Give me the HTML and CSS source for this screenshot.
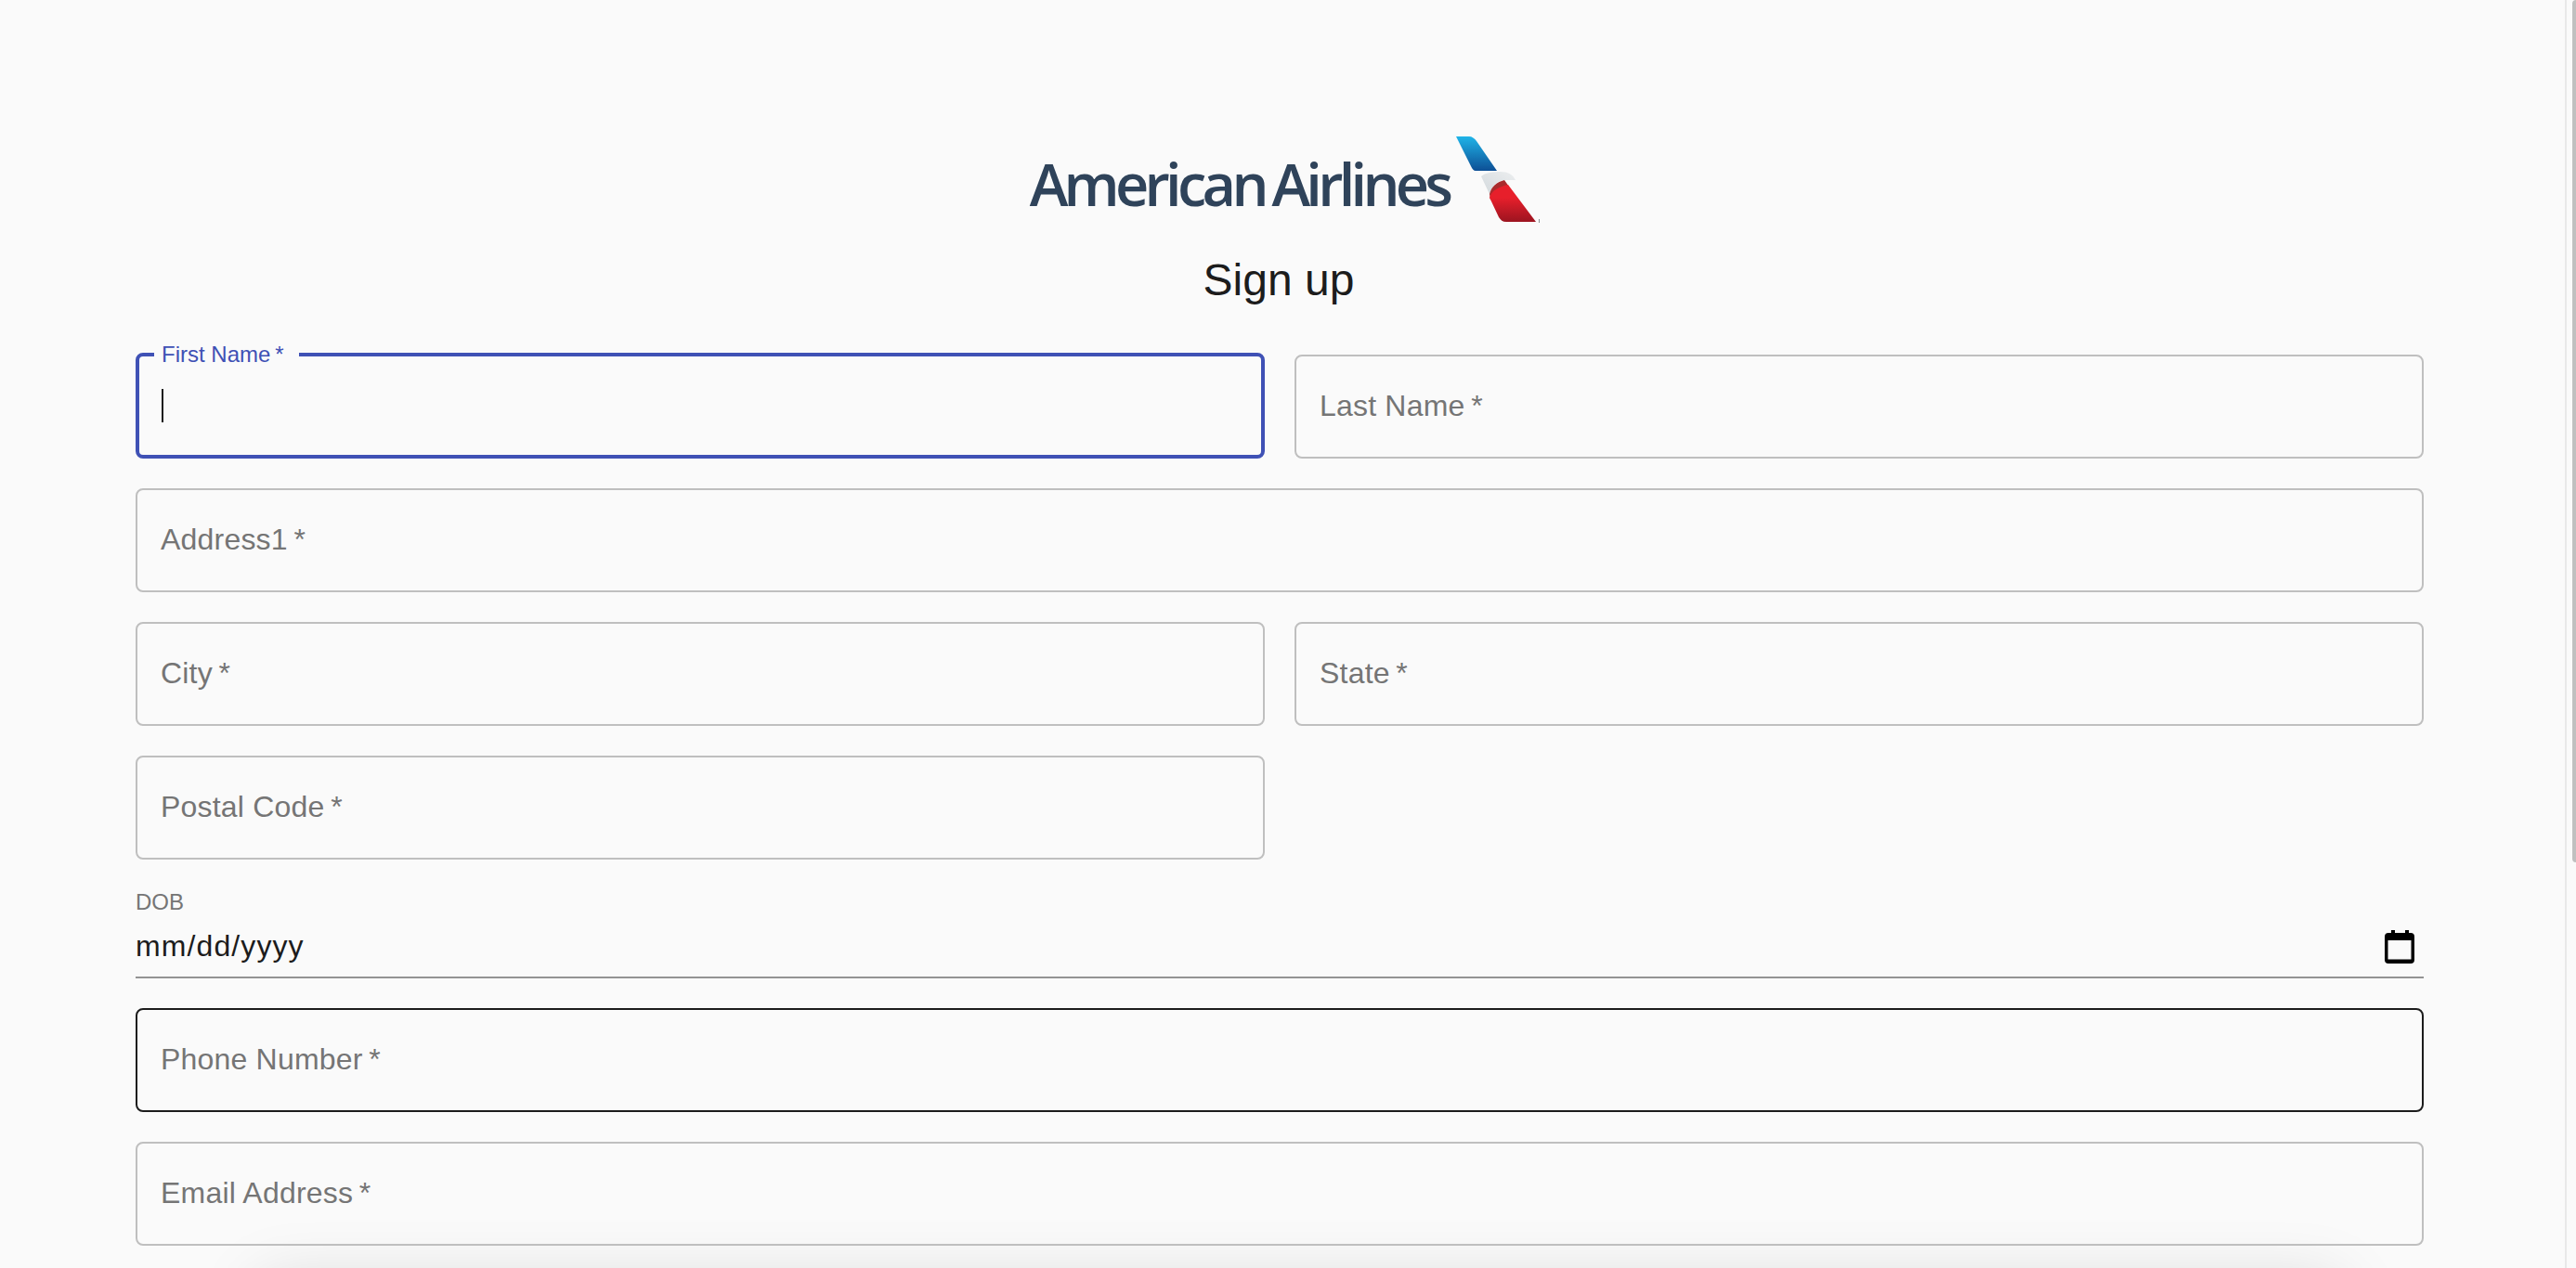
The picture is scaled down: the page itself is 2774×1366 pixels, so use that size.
FILE: index.html
```html
<!DOCTYPE html>
<html lang="en">
<head>
    <meta charset="UTF-8">
    <meta name="viewport" content="width=device-width, initial-scale=1.0">
    <title>Sign up</title>
    <link rel="stylesheet" href="styles.css">
</head>
<body>

<main class="page">
    <div class="logo">
        <span class="logo-text">American Airlines</span>
        <svg class="logo-tail" viewBox="0 0 94 94" width="94" height="94">
            <defs>
                <linearGradient id="tailBlue" x1="0" y1="0" x2="0" y2="1">
                    <stop offset="0" stop-color="#1fb4e8"/>
                    <stop offset="1" stop-color="#0d4f95"/>
                </linearGradient>
                <linearGradient id="tailSilver" x1="0" y1="1" x2="1" y2="0">
                    <stop offset="0" stop-color="#d3d9dd"/>
                    <stop offset="1" stop-color="#eceeef"/>
                </linearGradient>
                <linearGradient id="tailRed" x1="0" y1="0" x2="0" y2="1">
                    <stop offset="0.35" stop-color="#e71f2b"/>
                    <stop offset="1" stop-color="#9c1420"/>
                </linearGradient>
            </defs>
            <path fill="url(#tailBlue)" d="M0 0H14C17 0 20 2 22 5L44 37H21C19 37 17.500 35 16.500 33Z"/>
            <path fill="url(#tailSilver)" d="M27 43C31 39 40 38 48 38C56 38 61 41 64 47H53C46 47 39 52 36 62Z"/>
            <path fill="#a92b2d" d="M36 62C38 54 44 49 52 47L57 54C47 55 39 60 37 68Z"/>
            <path fill="url(#tailRed)" d="M36 66C38 58 47 54 56 52L86 92H54C50 92 48 90 46 87L38 70Z"/>
            <path fill="#8a8f94" d="M89 89h1v4h-1z"/>
        </svg>
    </div>

    <h1 class="title">Sign up</h1>

    <form class="form">
        <div class="field field-focused">
            <span class="float-label">First Name&thinsp;*</span>
            <span class="caret"></span>
        </div>
        <div class="field"><span class="field-label">Last Name&thinsp;*</span></div>
        <div class="field wide"><span class="field-label">Address1&thinsp;*</span></div>
        <div class="field"><span class="field-label">City&thinsp;*</span></div>
        <div class="field"><span class="field-label">State&thinsp;*</span></div>
        <div class="field"><span class="field-label">Postal Code&thinsp;*</span></div>
        <div class="spacer"></div>
        <div class="date wide">
            <span class="date-label">DOB</span>
            <div class="date-input">
                <span>mm/dd/yyyy</span>
                <svg class="date-icon" viewBox="0 0 32 36" width="32" height="36">
                    <path d="M7 0h4v4H7zM22 0h4v4h-4z"/>
                    <path d="M4 3h24a4 4 0 0 1 4 4v25a4 4 0 0 1-4 4H4a4 4 0 0 1-4-4V7a4 4 0 0 1 4-4zM3.500 11v20.500h25V11z" fill-rule="evenodd"/>
                </svg>
            </div>
        </div>
        <div class="field field-hover wide"><span class="field-label">Phone Number&thinsp;*</span></div>
        <div class="field wide"><span class="field-label">Email Address&thinsp;*</span></div>
    </form>

    <div class="submit-shadow"></div>
</main>

<div class="scroll-track">
    <div class="scroll-thumb"></div>
</div>

</body>
</html>
```

FILE: styles.css
```css
body {
    margin: 0;
    display: flex;
    height: 1366px;
    overflow: hidden;
    background-color: #fafafa;
    font-family: 'Liberation Sans', Arial, sans-serif;
    color: #1c1c1c;
}

.page {
    width: 2762px;
    height: 1366px;
    overflow: hidden;
    box-sizing: border-box;
    padding: 147px 152px 0 146px;
}

.logo {
    display: flex;
    justify-content: center;
    align-items: flex-start;
    height: 123px;
    padding-left: 15px;
}

.logo-text {
    margin-top: 8px;
    font-family: 'Open Sans', sans-serif;
    font-size: 63px;
    line-height: 86px;
    font-weight: 600;
    letter-spacing: -4.7px;
    word-spacing: -4px;
    color: #2f435a;
}

.logo-tail {
    display: block;
    margin-left: 8px;
}

.title {
    margin: 0 0 48px;
    padding-right: 2px;
    font-size: 48px;
    font-weight: 400;
    line-height: 64px;
    text-align: center;
}

.form {
    display: grid;
    grid-template-columns: 1fr 1fr;
    gap: 32px;
}

.wide {
    grid-column: span 2;
}

.field {
    position: relative;
    box-sizing: border-box;
    height: 112px;
    display: flex;
    align-items: center;
    padding: 0 0 2px 25px;
    border: 2px solid #bfbfbf;
    border-radius: 8px;
    font-size: 32px;
    letter-spacing: 0.2px;
    color: #757575;
}

.field-hover {
    border-color: #1c1c1c;
}

.field-focused {
    height: 114px;
    margin-top: -2px;
    padding: 0 0 0 24px;
    border: 4px solid #3f51b5;
}

.float-label {
    position: absolute;
    left: 16px;
    top: -16px;
    padding: 0 17px 0 8px;
    background-color: #fafafa;
    font-size: 24px;
    line-height: 28px;
    letter-spacing: 0;
    color: #3f51b5;
}

.caret {
    width: 2px;
    height: 36px;
    background-color: #1c1c1c;
}

.date {
    display: flex;
    flex-direction: column;
    height: 96px;
    box-sizing: border-box;
    border-bottom: 2px solid #949494;
}

.date-label {
    font-size: 24px;
    line-height: 28px;
    color: #757575;
}

.date-input {
    display: flex;
    justify-content: space-between;
    align-items: center;
    padding-right: 10px;
    font-size: 32px;
    line-height: 44px;
    letter-spacing: 1.1px;
    margin-top: 11px;
}

.date-icon {
    display: block;
    margin-top: 2px;
    fill: #000;
}

.submit-shadow {
    width: 2240px;
    height: 96px;
    margin: 40px 0 0 134px;
    box-shadow: 0 0 70px 0 rgba(0, 0, 0, 0.15);
}

.scroll-track {
    width: 12px;
    border-left: 2px solid #e8e8e8;
    padding-left: 6px;
    box-sizing: border-box;
}

.scroll-thumb {
    width: 4px;
    height: 929px;
    background-color: #c0c0c0;
    border-radius: 4px 0 0 4px;
}
```
